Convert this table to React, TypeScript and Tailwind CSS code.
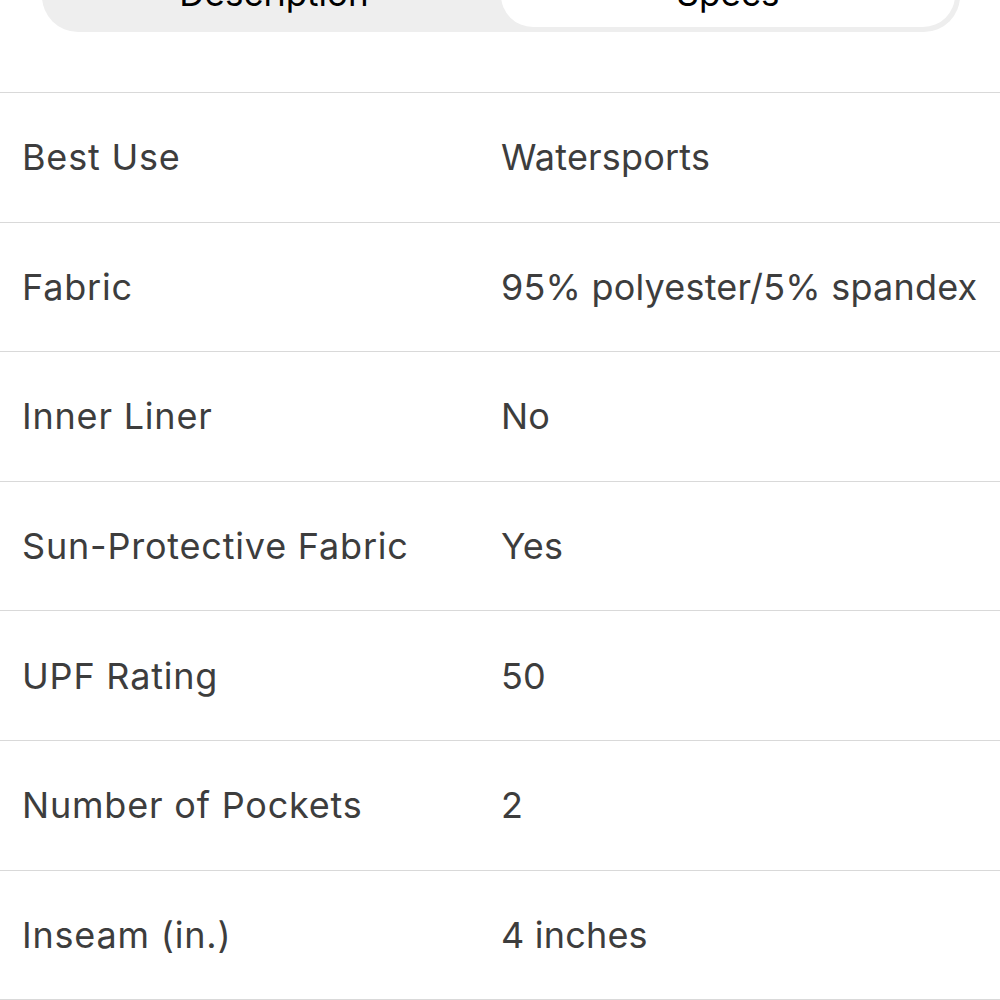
import React from 'react';

const specs = [
  ['Best Use', 'Watersports'],
  ['Fabric', '95% polyester/5% spandex'],
  ['Inner Liner', 'No'],
  ['Sun-Protective Fabric', 'Yes'],
  ['UPF Rating', '50'],
  ['Number of Pockets', '2'],
  ['Inseam (in.)', '4 inches'],
];

const App = () => {
  return (
    <div className="min-h-screen bg-white font-['Inter',sans-serif] overflow-hidden">
      {/* Segmented control */}
      <div className="mx-[42px] mr-[40px] mt-[-46px] h-[78px] rounded-[36px] bg-[#eeeeee] p-[5px] flex">
        <button className="flex-1 flex items-center justify-center text-[35px] text-black">
          Description
        </button>
        <button className="flex-1 flex items-center justify-center rounded-[32px] bg-white text-[35px] text-black">
          Specs
        </button>
      </div>

      {/* Specs table */}
      <div className="mt-[60px] border-t border-[#d9d9d9]">
        {specs.map(([label, value]) => (
          <div
            key={label}
            className="h-[129.6px] border-b border-[#d9d9d9] flex items-center text-[36px] text-[#3d3d3d]"
          >
            <div className="w-[501px] pl-[22px] tracking-[0.8px]">{label}</div>
            <div className="flex-1 tracking-[0.2px]">{value}</div>
          </div>
        ))}
      </div>
    </div>
  );
};

export default App;
